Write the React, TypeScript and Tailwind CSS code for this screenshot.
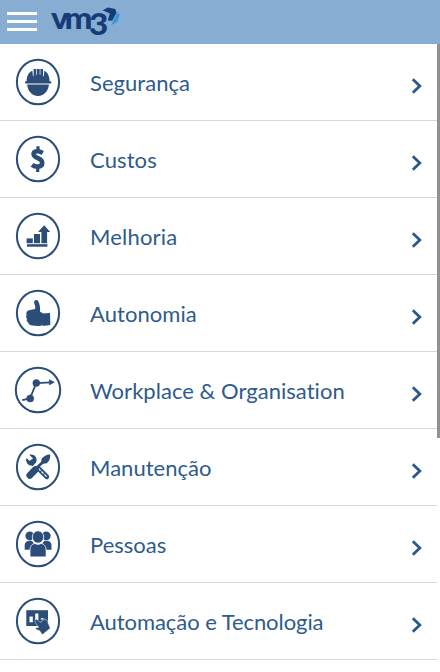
import React from "react";

const ink = "#2b4d77";

const icons: Record<string, React.ReactNode> = {
  helmet: (
    <g fill={ink}>
      <path d="M18.6 30C18.6 24.5 20.3 20.8 24.3 18.6L25 24.2H25.6V17H28.3V22.8H29V17H31.7V22.8H32.4V17H35V24.2H35.8L36.3 18.6C40 20.8 41.6 24.5 41.6 30Z" />
      <rect x="17" y="29.2" width="26.3" height="2.4" rx=".8" />
      <path d="M19.1 32.6H41C40.2 39 36.4 44 30 44S19.8 39 19.1 32.6Z" />
    </g>
  ),
  dollar: (
    <g fill="none" stroke={ink}>
      <path d="M34.8 23.9C32.6 22.6 30.7 22.1 28.9 22.2C26.3 22.3 25.6 23.5 25.6 25C25.6 27 27.2 28 29.9 29.2C33 30.5 34.2 31.8 34.2 34.1C34.2 36.4 32.5 37.6 29.8 37.6C27.7 37.6 25.6 37 24 35.8" strokeWidth="4.6" />
      <path d="M30 17.2V22M29.7 38V43" strokeWidth="3.2" />
    </g>
  ),
  growth: (
    <g fill={ink}>
      <rect x="18.6" y="32.4" width="6.2" height="4.8" />
      <rect x="26" y="28" width="6" height="9.2" />
      <path d="M33.4 37.2V26H30.1L36.2 19.2L42.2 26H39.1V37.2Z" />
      <rect x="19" y="38.2" width="20.4" height="2.5" />
    </g>
  ),
  thumb: (
    <g fill={ink}>
      <path d="M26.1 19.6C25.6 17.3 29.1 16.1 30.2 18.2C31.8 21 32.4 24.5 32 28.6L35 30.5V42C33 43 29.5 43.2 24.5 42.6C22 42.3 20.4 41.2 20 39.3C18.5 38.5 18.4 36.8 19 35.7C17.9 34.7 17.9 33 18.6 32C17.8 29 19.5 27.3 22.3 27.1L27 26C28 24.2 26.7 22.4 26.1 19.6Z" />
      <path d="M34.6 30.5L42 30L42.3 42L35 43Z" />
    </g>
  ),
  route: (
    <g fill={ink} stroke={ink}>
      <path d="M14.2 40.2L22 38.4L28.3 23L43 22.3" fill="none" strokeWidth="1.8" />
      <circle cx="28.3" cy="23" r="3.5" strokeWidth="0.5" />
      <circle cx="22.2" cy="38.5" r="3.6" strokeWidth="0.5" />
      <path d="M41.4 19.6L46.4 22.2L41.4 24.9Z" strokeWidth="0.5" />
    </g>
  ),
  tools: (
    <g>
      <path d="M24 25L38.8 39.8" stroke={ink} strokeWidth="4.8" strokeLinecap="round" />
      <path d="M30.5 31.5L38.6 39.6" stroke="#fff" strokeWidth="1.2" strokeDasharray="3 1.2" />
      <path d="M18.5 21L22.1 24.2L25 21.5L21.3 17.8C25.5 16.8 29.6 19.7 28.5 24.6L26 28.6C21 29.7 16.9 25.8 18.5 21Z" fill={ink} />
      <path d="M32.5 23.6L23.6 33.5" stroke="#fff" strokeWidth="4.2" />
      <path d="M42.2 17.5C39 17.2 36 19 33.7 21.4L33.2 24.8L35.3 26.8L38.8 26.2C41.2 24 42.7 20.8 42.2 17.5Z" fill={ink} />
      <path d="M26.5 32.8L35 25" stroke={ink} strokeWidth="2.8" />
      <path d="M27.7 32.4L22 38.3" stroke="#fff" strokeWidth="8.2" />
      <path d="M27.5 32.5L21.8 38.3" stroke={ink} strokeWidth="6.8" strokeLinecap="round" />
    </g>
  ),
  people: (
    <g fill={ink}>
      <circle cx="21.8" cy="21.8" r="4.4" />
      <circle cx="38.3" cy="21.8" r="4.4" />
      <path d="M16.7 35.8V31C16.7 28.2 19.2 26.7 22.3 26.7C24.4 26.7 27 29 27 35.8Z" />
      <path d="M43.5 35.8V31C43.5 28.2 41 26.7 37.9 26.7C35.7 26.7 33.2 29 33.2 35.8Z" />
      <ellipse cx="30" cy="23" rx="5.7" ry="6.2" stroke="#fff" strokeWidth=".8" />
      <path d="M22 42.9V36.5C22 32 24.2 29.7 27 29.5Q30 31.3 33 29.5C35.9 29.7 38.1 32 38.1 36.5V42.9Z" stroke="#fff" strokeWidth=".8" />
    </g>
  ),
  automation: (
    <g>
      <rect x="18.3" y="19.2" width="21.7" height="15.8" fill={ink} />
      <path d="M21.5 31.3V25.5H24.8V31.3ZM27.2 29V22.5H30.4V29ZM32.8 28.6V27.2H35.6V28.6Z" fill="#fff" />
      <path d="M27 29.4C27.9 27.9 29.4 28.1 30.1 29.4L32 31.5L36.5 28.2C38.2 28.2 39.8 29.6 40 31.8L42.3 37.3L34.3 43.7L31.6 39.7L28 38.6C27 37.7 27.6 36.7 29.4 36.6L30.6 36.3L27 31Z" fill={ink} stroke="#fff" strokeWidth=".5" />
    </g>
  ),
};

const rows = [
  { label: "Segurança", icon: "helmet", tracking: "tracking-[0.03px]" },
  { label: "Custos", icon: "dollar", tracking: "tracking-[0.12px]" },
  { label: "Melhoria", icon: "growth", tracking: "tracking-[0.18px]" },
  { label: "Autonomia", icon: "thumb", tracking: "tracking-[0.06px]" },
  { label: "Workplace & Organisation", icon: "route", tracking: "tracking-[0.04px]" },
  { label: "Manutenção", icon: "tools", tracking: "tracking-[0.03px]" },
  { label: "Pessoas", icon: "people", tracking: "tracking-[0px]" },
  { label: "Automação e Tecnologia", icon: "automation", tracking: "tracking-[-0.06px]" },
];

function Logo() {
  return (
    <svg width="72" height="44" viewBox="50 0 72 44" className="ml-[13px] shrink-0 overflow-visible" aria-label="vm3">
      <text
        transform="scale(1.07 1)"
        x="47.6 60.3 83.2"
        y="29.2 29.2 35.4"
        fill="#163c78"
        fontSize="31"
        fontFamily="Lato, sans-serif"
        fontWeight="900"
      >
        vm3
      </text>
      <path d="M102.5 10.2L108 7.6L115.3 9.1L116.5 12.7L112.2 20.7L107.7 20.5L109.9 13.6Z" fill="#163c78" />
      <path d="M116.9 13L119.7 14L117.7 21.5L111.3 25.2L113.3 20.4Z" fill="#3399dc" />
    </svg>
  );
}

function MenuRow({ label, icon, tracking }: { label: string; icon: string; tracking: string }) {
  return (
    <a className="flex h-[77px] items-center border-b border-[#d8d8d8] pl-2 text-[#2f5b8c]">
      <svg width="60" height="60" viewBox="0 0 60 60" className="shrink-0">
        <ellipse cx="30" cy="30" rx={icon === "route" ? 22.2 : 21.1} ry="22.3" fill="none" stroke={ink} strokeWidth="2" />
        {icons[icon]}
      </svg>
      <span className={`ml-[22px] flex-1 whitespace-nowrap pt-[2px] text-[22px] leading-8 [font-variant-ligatures:none] ${tracking}`}>{label}</span>
      <svg width="12" height="18" viewBox="0 0 12 18" className="mr-[14px] mt-2 shrink-0">
        <path d="M1.8 2.3L8.8 9L1.8 15.7" fill="none" stroke="#2b588b" strokeWidth="2.8" />
      </svg>
    </a>
  );
}

export default function App() {
  return (
    <div className="h-[672px] w-[440px] overflow-hidden bg-white font-['Lato',sans-serif]">
      <header className="flex h-11 items-start bg-[#87add2]">
        <button className="ml-[7px] mt-3 flex w-[30px] shrink-0 flex-col gap-[5px]" aria-label="Menu">
          <span className="h-[3px] w-full bg-white" />
          <span className="h-[3px] w-full bg-white" />
          <span className="h-[3px] w-full bg-white" />
        </button>
        <Logo />
      </header>
      <div className="flex">
        <nav className="w-[437px]">
          {rows.map((row) => (
            <MenuRow key={row.label} {...row} />
          ))}
        </nav>
        <div className="h-[394px] w-[3px] bg-[#919191]" />
      </div>
    </div>
  );
}
